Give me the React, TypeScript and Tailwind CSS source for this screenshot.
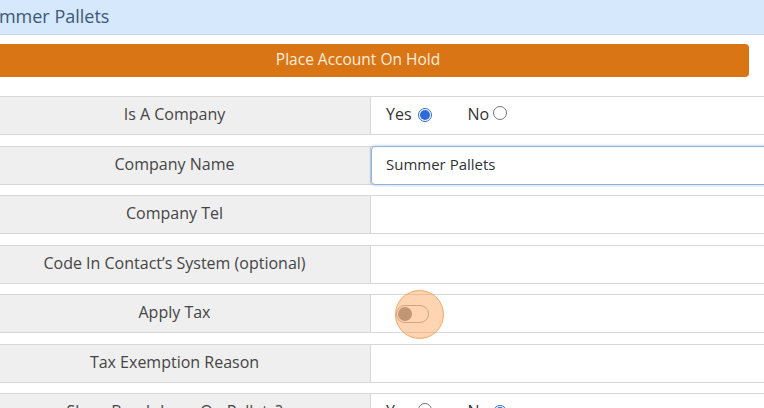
import React from 'react';

function Radio({ checked }: { checked?: boolean }) {
  return (
    <span
      className={`inline-flex items-center justify-center w-[14px] h-[14px] rounded-full border ${
        checked ? 'border-[#2f6bd8] bg-white' : 'border-[#777] bg-white'
      }`}
    >
      {checked && <span className="block w-[10px] h-[10px] rounded-full bg-[#2f6bd8]" />}
    </span>
  );
}

function YesNo({ yes }: { yes: boolean }) {
  return (
    <div className="flex items-center pl-[15px] text-[16px] text-[#333] -mt-[3px]">
      <span>Yes</span>
      <span className="ml-[6px]">
        <Radio checked={yes} />
      </span>
      <span className="ml-[36px]">No</span>
      <span className="ml-[4px]">
        <Radio checked={!yes} />
      </span>
    </div>
  );
}

function Row({ label, children }: { label: string; children?: React.ReactNode }) {
  return (
    <div className="flex h-[39px] shrink-0 border-y border-[#d7d7d7]">
      <div className="w-[392px] shrink-0 bg-[#efefef] border-r border-[#d7d7d7] flex items-center justify-center text-[16px] text-[#454545] pb-[3px]">
        {label}
      </div>
      <div className="flex-1 bg-white flex items-center">{children}</div>
    </div>
  );
}

export default function App() {
  return (
    <div className="w-[764px] h-[408px] overflow-hidden bg-white font-['Open_Sans',sans-serif]">
      <div className="-ml-[22px] w-[830px]">
        <div className="h-[35px] bg-[#d6e8fb] border-b border-[#c4d8ec] flex items-center text-[18px] text-[#3b5878] pb-[2px]">
          Summer Pallets
        </div>

        <div className="pt-[9px] pb-[19px] pl-[10px]">
          <button className="w-[782px] h-[33px] -ml-[21px] rounded-[4px] bg-[#d97515] text-[#fbeedd] text-[15.5px] flex items-center justify-center pb-[2px]">
            Place Account On Hold
          </button>
        </div>

        <div className="flex flex-col gap-[10.5px] pl-[1px]">
          <Row label="Is A Company">
            <YesNo yes={true} />
          </Row>

          <div className="flex h-[39px] shrink-0 border-y border-[#d7d7d7]">
            <div className="w-[392px] shrink-0 bg-[#efefef] border-r border-[#d7d7d7] flex items-center justify-center text-[16px] text-[#454545] pb-[3px]">
              Company Name
            </div>
            <div className="flex-1 -my-px">
              <input
                readOnly
                value="Summer Pallets"
                className="w-full h-[39px] rounded-[4px] border border-[#8fb3d9] bg-white px-[14px] pb-[3px] text-[15px] text-[#333] shadow-[0_0_3px_rgba(90,140,200,0.55)] outline-none font-['Open_Sans',sans-serif]"
              />
            </div>
          </div>

          <Row label="Company Tel" />
          <Row label="Code In Contact’s System (optional)" />

          <Row label="Apply Tax">
            <div className="relative ml-[25px] w-[33px] h-[18px] rounded-full border border-[#a9a9a9] bg-white flex items-center px-[1px]">
              <span className="block w-[14px] h-[14px] rounded-full bg-[#8f8f8f]" />
              <span className="absolute left-[-2px] top-[-16px] w-[49px] h-[49px] rounded-full bg-[rgba(255,160,85,0.45)] border-[1.5px] border-[#f6a663]" />
            </div>
          </Row>

          <Row label="Tax Exemption Reason" />

          <Row label="Show Breakdown On Pallets?">
            <YesNo yes={false} />
          </Row>
        </div>
      </div>
    </div>
  );
}
